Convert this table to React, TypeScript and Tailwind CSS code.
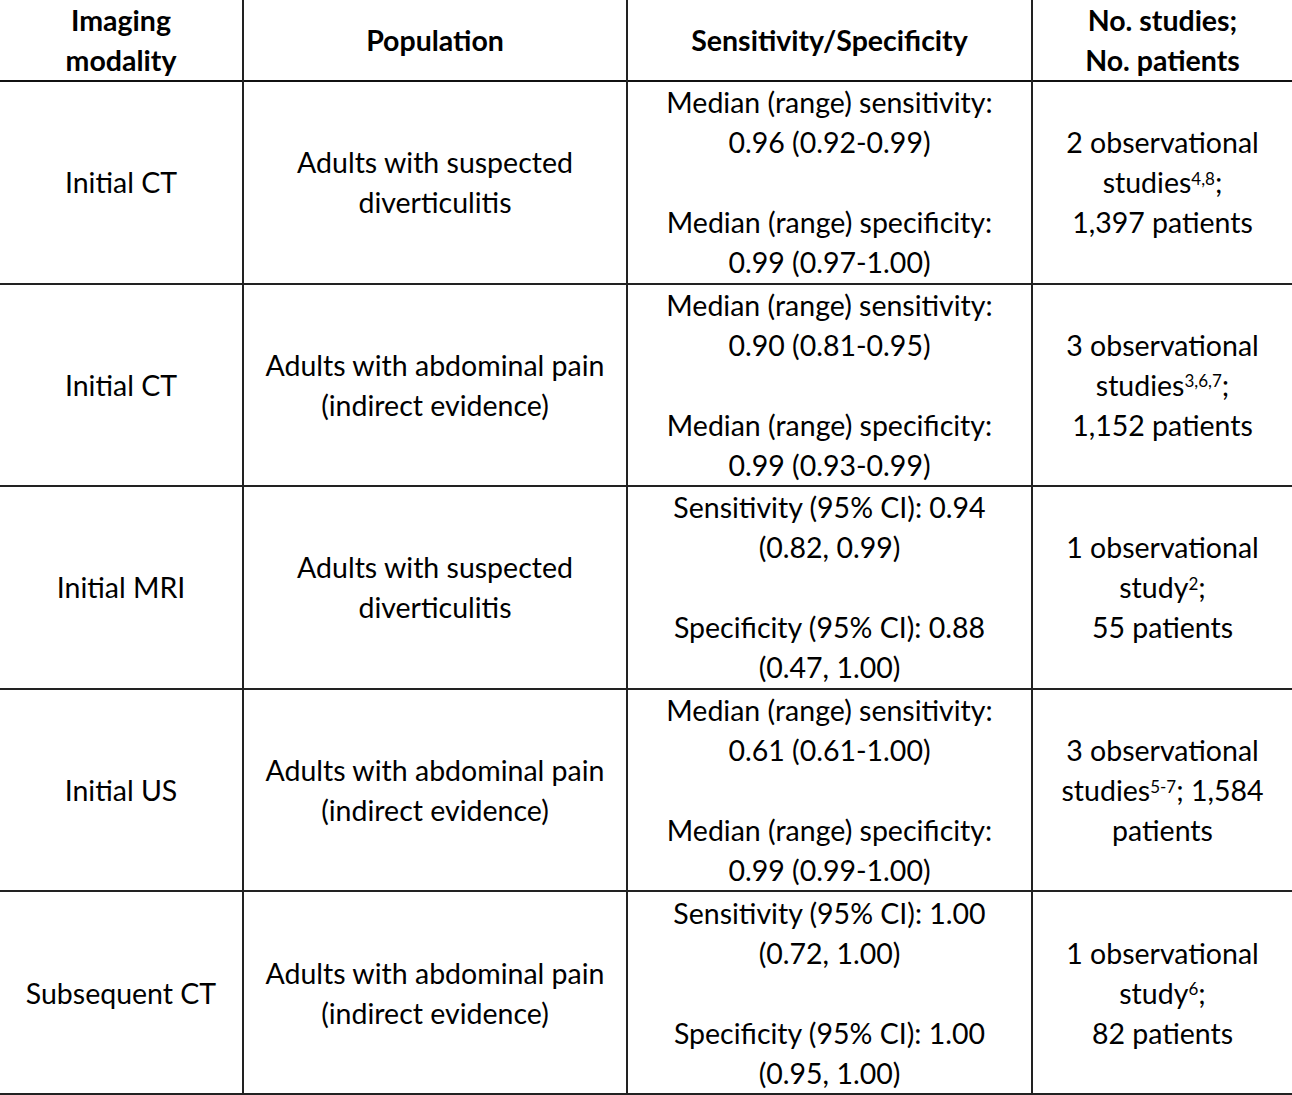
import React from 'react';

type Row = {
    modality: string;
    population: React.ReactNode;
    stats: React.ReactNode;
    studies: React.ReactNode;
};

const Sup = ({ children }: { children: React.ReactNode }) => (
    <sup className="text-[17px] leading-none">{children}</sup>
);

const rows: Row[] = [
    {
        modality: 'Initial CT',
        population: <>Adults with suspected<br />diverticulitis</>,
        stats: <>Median (range) sensitivity:<br />0.96 (0.92-0.99)<br /><br />Median (range) specificity:<br />0.99 (0.97-1.00)</>,
        studies: <>2 observational<br />studies<Sup>4,8</Sup>;<br />1,397 patients</>,
    },
    {
        modality: 'Initial CT',
        population: <>Adults with abdominal pain<br />(indirect evidence)</>,
        stats: <>Median (range) sensitivity:<br />0.90 (0.81-0.95)<br /><br />Median (range) specificity:<br />0.99 (0.93-0.99)</>,
        studies: <>3 observational<br />studies<Sup>3,6,7</Sup>;<br />1,152 patients</>,
    },
    {
        modality: 'Initial MRI',
        population: <>Adults with suspected<br />diverticulitis</>,
        stats: <>Sensitivity (95% CI): 0.94<br />(0.82, 0.99)<br /><br />Specificity (95% CI): 0.88<br />(0.47, 1.00)</>,
        studies: <>1 observational<br />study<Sup>2</Sup>;<br />55 patients</>,
    },
    {
        modality: 'Initial US',
        population: <>Adults with abdominal pain<br />(indirect evidence)</>,
        stats: <>Median (range) sensitivity:<br />0.61 (0.61-1.00)<br /><br />Median (range) specificity:<br />0.99 (0.99-1.00)</>,
        studies: <>3 observational<br />studies<Sup>5-7</Sup>; 1,584<br />patients</>,
    },
    {
        modality: 'Subsequent CT',
        population: <>Adults with abdominal pain<br />(indirect evidence)</>,
        stats: <>Sensitivity (95% CI): 1.00<br />(0.72, 1.00)<br /><br />Specificity (95% CI): 1.00<br />(0.95, 1.00)</>,
        studies: <>1 observational<br />study<Sup>6</Sup>;<br />82 patients</>,
    },
];

export default function App() {
    return (
        <div className="w-[1292px] h-[1095px] bg-white text-black font-['Lato',sans-serif] text-[28.5px] leading-[40px]">
            <table className="w-[1292px] table-fixed border-collapse">
                <colgroup>
                    <col className="w-[243px]" />
                    <col className="w-[384px]" />
                    <col className="w-[405px]" />
                    <col className="w-[260px]" />
                </colgroup>
                <thead>
                    <tr className="h-[81px] border-b-2 border-[#111]">
                        <th className="p-0 text-center align-middle font-bold border-r-2 border-[#222]">Imaging<br />modality</th>
                        <th className="p-0 text-center align-middle font-bold border-r-2 border-[#222]">Population</th>
                        <th className="p-0 text-center align-middle font-bold border-r-2 border-[#222]">Sensitivity/Specificity</th>
                        <th className="p-0 text-center align-middle font-bold">No. studies;<br />No. patients</th>
                    </tr>
                </thead>
                <tbody>
                    {rows.map((r, i) => (
                        <tr key={i} className="h-[202.6px] border-b-2 border-[#222]">
                            <td className="p-0 text-center align-middle border-r-2 border-[#222]">{r.modality}</td>
                            <td className="p-0 text-center align-middle border-r-2 border-[#222]">{r.population}</td>
                            <td className="p-0 text-center align-middle border-r-2 border-[#222]">{r.stats}</td>
                            <td className="p-0 text-center align-middle">{r.studies}</td>
                        </tr>
                    ))}
                </tbody>
            </table>
        </div>
    );
}
